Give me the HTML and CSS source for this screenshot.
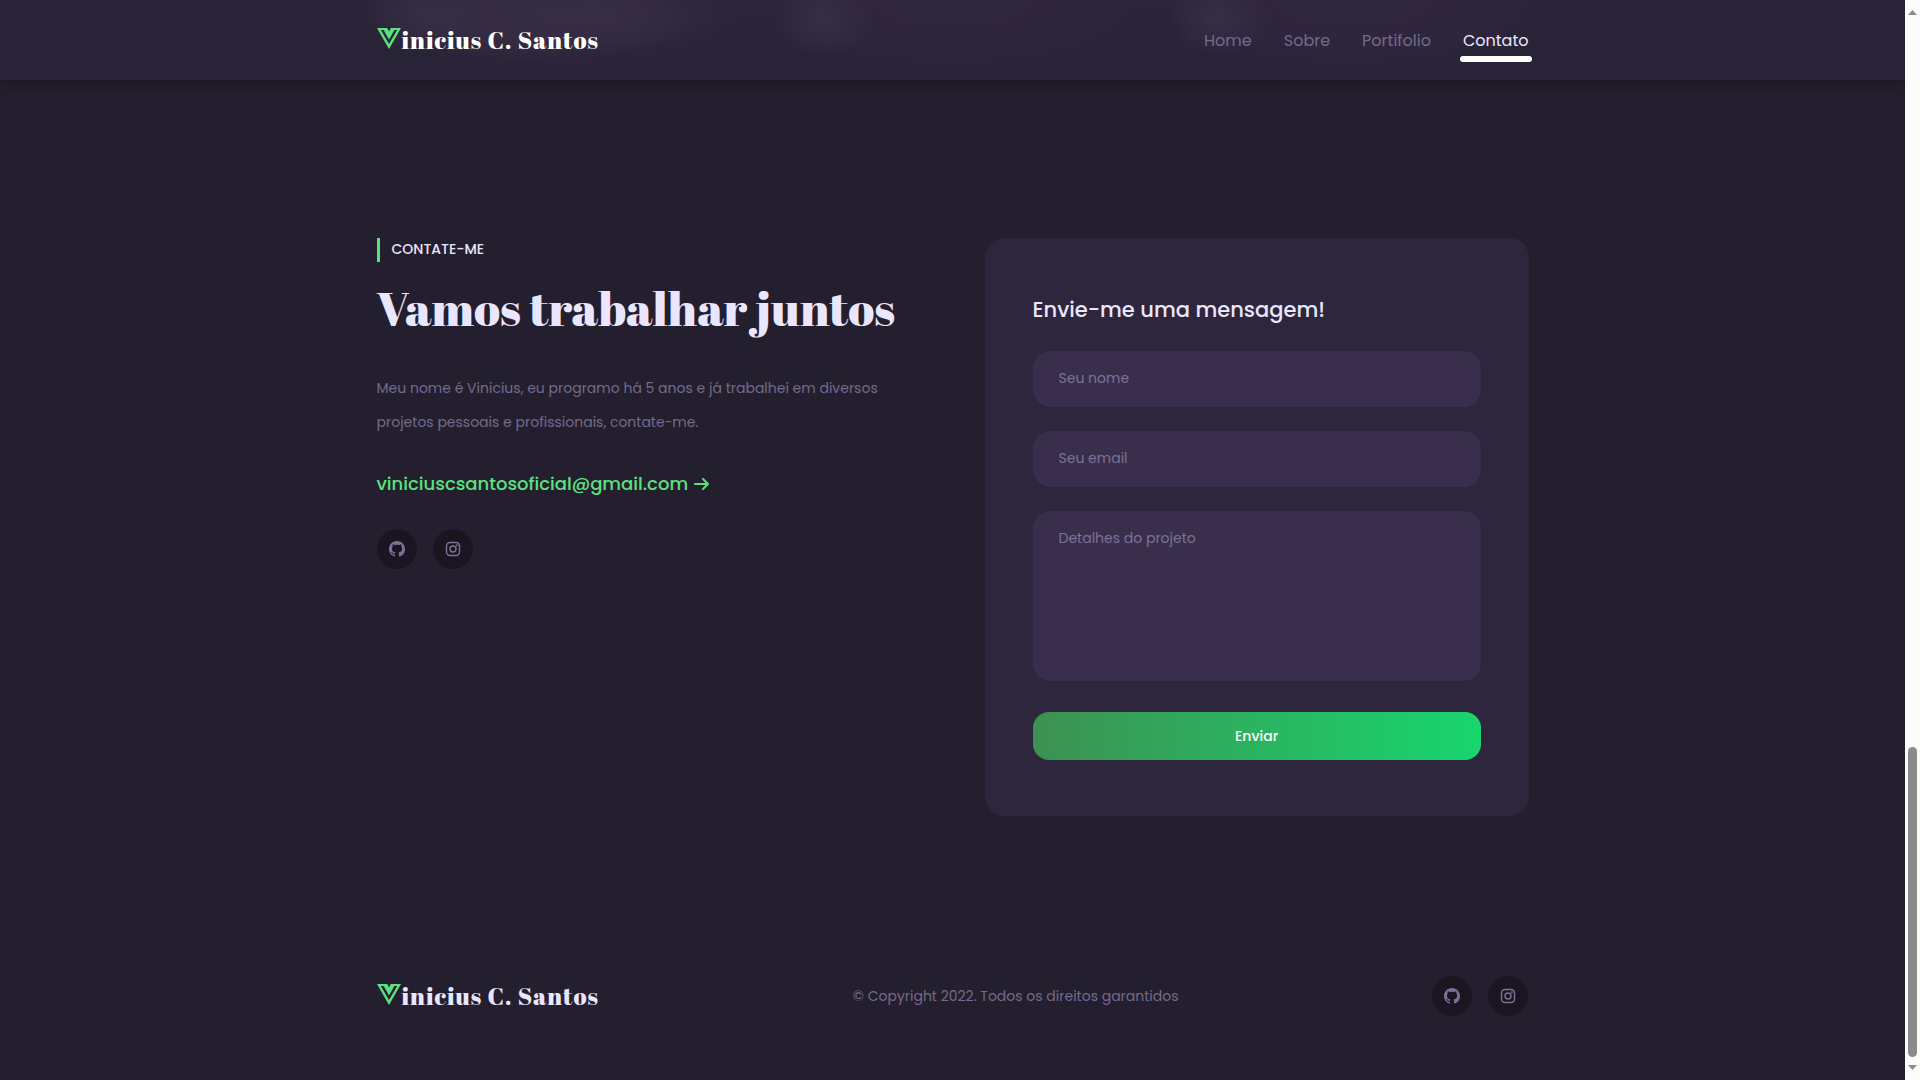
FILE: index.html
```html
<!DOCTYPE html>
<html lang="pt-BR">
<head>
<meta charset="utf-8">
<title>Vinicius C. Santos</title>
<meta name="viewport" content="width=device-width, initial-scale=1">
<link rel="stylesheet" href="styles.css">
</head>
<body>
<svg class="sprite" aria-hidden="true">
  <symbol id="mark" viewBox="0 0 24 21">
    <path fill-rule="evenodd" d="M0 0h24L12 21zM3.800 2L12 16l8.200-14z"/>
    <path d="M5.500 0H18.500L12 11.500z"/>
    <path class="notch" d="M10-.500h4L12 3.500z"/>
  </symbol>
  <symbol id="github" viewBox="0 0 16 16">
    <path d="M8 0C3.580 0 0 3.580 0 8c0 3.540 2.290 6.530 5.470 7.590.400.070.550-.170.550-.380 0-.190-.010-.820-.010-1.490-2.010.370-2.530-.490-2.690-.940-.090-.230-.480-.940-.820-1.130-.280-.150-.680-.520-.010-.530.630-.010 1.080.580 1.230.820.720 1.210 1.870.870 2.330.660.070-.520.280-.870.510-1.070-1.780-.200-3.640-.890-3.640-3.950 0-.870.310-1.590.820-2.150-.080-.200-.360-1.020.080-2.120 0 0 .670-.210 2.200.820.640-.180 1.320-.270 2-.270s1.360.090 2 .270c1.530-1.040 2.200-.820 2.200-.820.440 1.100.160 1.920.080 2.120.510.560.820 1.270.820 2.150 0 3.070-1.870 3.750-3.650 3.950.290.250.540.730.540 1.480 0 1.070-.010 1.930-.010 2.200 0 .210.150.460.550.380A8.010 8.010 0 0 0 16 8c0-4.420-3.580-8-8-8z"/>
  </symbol>
  <symbol id="instagram" viewBox="0 0 16 16">
    <rect x="1.500" y="1.500" width="13" height="13" rx="3.500" fill="none" stroke="currentColor" stroke-width="1.400"/>
    <circle cx="8" cy="8" r="3" fill="none" stroke="currentColor" stroke-width="1.400"/>
    <circle cx="11.800" cy="4.200" r="1"/>
  </symbol>
</svg>
<div class="page">
  <header class="header">
    <div class="container bar">
      <a class="logo logo-light" href="#home"><svg class="mark" aria-hidden="true"><use href="#mark"/></svg>inicius C. Santos</a>
      <nav class="nav">
        <a href="#home">Home</a>
        <a href="#sobre">Sobre</a>
        <a href="#portifolio">Portifolio</a>
        <a class="active" href="#contato">Contato</a>
      </nav>
    </div>
  </header>
  <main class="container contact" id="contato">
    <section class="intro">
      <p class="subtitle">CONTATE-ME</p>
      <h1 class="title">Vamos trabalhar juntos</h1>
      <p class="text">Meu nome é Vinicius, eu programo há 5 anos e já trabalhei em diversos projetos pessoais e profissionais, contate-me.</p>
      <a class="email" href="mailto:viniciuscsantosoficial@gmail.com">viniciuscsantosoficial@gmail.com
        <svg class="arrow" viewBox="0 0 16 14" aria-hidden="true"><path d="M1 7h13M9 2l5 5-5 5"/></svg></a>
      <div class="socials">
        <a class="social" href="#github" aria-label="GitHub"><svg aria-hidden="true"><use href="#github"/></svg></a>
        <a class="social" href="#instagram" aria-label="Instagram"><svg aria-hidden="true"><use href="#instagram"/></svg></a>
      </div>
    </section>
    <form class="card">
      <h2 class="card-title">Envie-me uma mensagem!</h2>
      <input class="field" type="text" placeholder="Seu nome" aria-label="Seu nome">
      <input class="field" type="email" placeholder="Seu email" aria-label="Seu email">
      <textarea class="field area" placeholder="Detalhes do projeto" aria-label="Detalhes do projeto"></textarea>
      <button class="send" type="submit">Enviar</button>
    </form>
  </main>
  <footer class="container bar footer">
    <a class="logo" href="#home"><svg class="mark" aria-hidden="true"><use href="#mark"/></svg>inicius C. Santos</a>
    <p class="copy">© Copyright 2022. Todos os direitos garantidos</p>
    <div class="socials">
      <a class="social" href="#github" aria-label="GitHub"><svg aria-hidden="true"><use href="#github"/></svg></a>
      <a class="social" href="#instagram" aria-label="Instagram"><svg aria-hidden="true"><use href="#instagram"/></svg></a>
    </div>
  </footer>
</div>
<div class="scrollbar" aria-hidden="true">
  <svg viewBox="0 0 9 5"><path d="M0 5l4.500-5L9 5z"/></svg>
  <div class="track"><div class="thumb"></div></div>
  <svg viewBox="0 0 9 5"><path d="M0 0l4.500 5L9 0z"/></svg>
</div>
</body>
</html>
```
FILE: styles.css
```css
* { box-sizing: border-box; margin: 0; padding: 0; }

body {
  display: flex;
  min-height: 100vh;
  background: #241f2e;
  color: #eae6ff;
  font-family: Poppins, Inter, sans-serif;
  font-size: 14px;
}

a { color: inherit; text-decoration: none; }
svg { fill: currentColor; }
.sprite { position: absolute; width: 0; height: 0; }

.page { flex: 1; display: flex; flex-direction: column; min-width: 0; }
.container { width: 100%; max-width: 1152px; margin: 0 auto; }
.bar { display: flex; align-items: center; justify-content: space-between; }

.header {
  position: sticky;
  top: 0;
  z-index: 1;
  box-shadow: 0 2px 16px rgba(0, 0, 0, .4);
  background:
    radial-gradient(60px 40px at 428px 12px, #3d354c60, #3d354c00),
    radial-gradient(170px 44px at 530px 16px, #3a314890, #3a314880 50%, #3a314800),
    radial-gradient(130px 40px at 600px 16px, #3a314870, #3a314800),
    radial-gradient(50px 40px at 823px 18px, #3b3249c0, #3b324900),
    radial-gradient(50px 40px at 1218px 18px, #3b3249c0, #3b324900),
    radial-gradient(240px 80px at 555px 0, #2f263d, #2f263dd0 60%, #2f263d00),
    radial-gradient(230px 80px at 952px 0, #2f263d, #2f263dd0 60%, #2f263d00),
    radial-gradient(230px 80px at 1350px 0, #2f263d, #2f263dd0 60%, #2f263d00),
    #282337;
}
.header .bar { height: 80px; }

.logo {
  display: flex;
  align-items: center;
  gap: 1px;
  font-family: "Abril Fatface", "Liberation Serif", serif;
  font-size: 24px;
  font-weight: 400;
  letter-spacing: 1px;
  line-height: 32px;
}
.logo-light { color: #fff; }
.mark { width: 24px; height: 21px; margin-bottom: 3px; color: #5ae27d; }
.notch { fill: #282337; }

.nav { display: flex; gap: 32px; padding-top: 2px; font-size: 16px; line-height: 24px; color: #746a8c; }
.active { position: relative; color: #eae6ff; }
.active::after {
  content: "";
  position: absolute;
  left: -3px;
  right: -3px;
  bottom: -9px;
  height: 6px;
  border-radius: 3px;
  background: #fff;
}

.contact {
  display: grid;
  grid-template-columns: minmax(0, 1fr) minmax(0, 1fr);
  gap: 64px;
  padding: 158px 0 120px;
}
.intro { display: flex; flex-direction: column; align-items: flex-start; }
.subtitle { border-left: 3px solid #5ae27d; padding: 0 0 2px 12px; line-height: 22px; font-weight: 500; }
.title {
  margin: 14px 0 31px;
  font-family: "Abril Fatface", "Liberation Serif", serif;
  font-size: 48px;
  font-weight: 400;
  line-height: 64px;
  white-space: nowrap;
}
.text { max-width: 528px; color: #746a8c; font-size: 14px; line-height: 34px; }
.email {
  display: flex;
  align-items: center;
  gap: 6px;
  margin-top: 29px;
  color: #5ae27d;
  font-size: 18px;
  font-weight: 500;
  line-height: 32px;
}
.arrow { width: 16px; height: 14px; fill: none; stroke: currentColor; stroke-width: 2; stroke-linecap: round; stroke-linejoin: round; }

.socials { display: flex; gap: 16px; }
.intro .socials { margin-top: 29px; }
.social {
  display: grid;
  place-items: center;
  width: 40px;
  height: 40px;
  border-radius: 50%;
  background: #1a1621;
  color: #7d7198;
}
.social svg { width: 16px; height: 16px; }

.card {
  display: flex;
  flex-direction: column;
  gap: 24px;
  padding: 56px 48px;
  border-radius: 20px;
  background: #2e263d;
}
.card-title { padding-bottom: 2px; font-size: 21px; font-weight: 500; line-height: 31px; }
.field {
  display: block;
  width: 100%;
  height: 56px;
  padding: 0 26px 2px;
  border: 0;
  border-radius: 18px;
  background: #392f4d;
  color: #eae6ff;
  font: 400 14px/24px Poppins, Inter, sans-serif;
}
.field::placeholder { color: #7d7198; opacity: 1; }
.area { height: 170px; padding: 15px 26px; resize: none; }
.send {
  height: 48px;
  margin-top: 7px;
  border: 0;
  border-radius: 16px;
  background: linear-gradient(90deg, #3d9152, #18d66e);
  color: #fff;
  font: 500 14px/24px Poppins, Inter, sans-serif;
}

.footer { padding: 40px 0 64px; }
.copy { color: #746a8c; font-size: 14px; line-height: 24px; }

.scrollbar {
  position: relative;
  z-index: 2;
  display: flex;
  flex-direction: column;
  align-items: center;
  width: 15px;
  padding: 10px 0;
  background: #fcfcfc;
  color: #8b8b8b;
}
.scrollbar svg { width: 9px; height: 5px; }
.track { flex: 1; display: flex; flex-direction: column; justify-content: flex-end; padding: 8px 0; }
.thumb { width: 9px; height: 30%; border-radius: 5px; background: #8b8b8b; }
```
